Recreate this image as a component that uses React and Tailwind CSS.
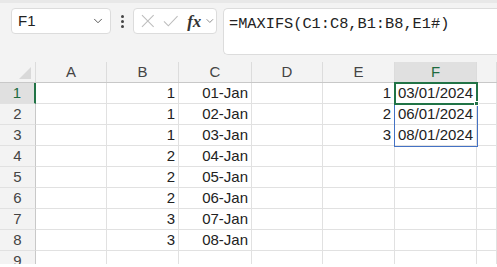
import React from 'react';
import { ChevronDown } from 'lucide-react';

const cols = [
  { key: 'A', w: 'w-[71px]' },
  { key: 'B', w: 'w-[72px]' },
  { key: 'C', w: 'w-[73px]' },
  { key: 'D', w: 'w-[71px]' },
  { key: 'E', w: 'w-[72px]' },
  { key: 'F', w: 'w-[82px]' },
  { key: 'G', w: 'w-[20px]' },
];

const rows = [
  { n: 1, B: '1', C: '01-Jan', E: '1', F: '03/01/2024' },
  { n: 2, B: '1', C: '02-Jan', E: '2', F: '06/01/2024' },
  { n: 3, B: '1', C: '03-Jan', E: '3', F: '08/01/2024' },
  { n: 4, B: '2', C: '04-Jan' },
  { n: 5, B: '2', C: '05-Jan' },
  { n: 6, B: '2', C: '06-Jan' },
  { n: 7, B: '3', C: '07-Jan' },
  { n: 8, B: '3', C: '08-Jan' },
  { n: 9 },
];

const App = () => {
  return (
    <div className="w-[497px] h-[267px] bg-white overflow-hidden font-['Liberation_Sans',Arial,sans-serif] text-[15px] text-[#222]">
      {/* Formula bar area */}
      <div className="h-[62px] bg-[#f3f3f3] border-t-[3px] border-[#e8e8e8] flex items-start pt-[5px]">
        <div className="ml-[11px] w-[100px] h-[26px] bg-white border border-[#dcdcdc] rounded-[4px] flex items-center justify-between pl-[6px] pr-[5px]">
          <span className="text-[15px] text-[#222]">F1</span>
          <ChevronDown size={14} strokeWidth={1.5} className="text-[#444]" />
        </div>

        <div className="w-[22px] h-[26px] flex flex-col items-center justify-center gap-[2px]">
          <span className="w-[3px] h-[3px] bg-[#444] rounded-full" />
          <span className="w-[3px] h-[3px] bg-[#444] rounded-full" />
          <span className="w-[3px] h-[3px] bg-[#444] rounded-full" />
        </div>

        <div className="w-[84px] h-[26px] bg-white border border-[#dcdcdc] rounded-[4px] flex items-center pl-[6px]">
          <svg width="14" height="14" viewBox="0 0 14 14" className="ml-[1px]">
            <path d="M1 1 L13 13 M13 1 L1 13" stroke="#bdbdbd" strokeWidth="1.1" fill="none" />
          </svg>
          <svg width="16" height="14" viewBox="0 0 16 14" className="ml-[8px]">
            <path d="M1 7.5 L5.5 12 L15 2" stroke="#bdbdbd" strokeWidth="1.1" fill="none" />
          </svg>
          <span className="ml-[9px] font-['Liberation_Serif',serif] italic font-bold text-[17px] text-[#333] leading-none">fx</span>
          <ChevronDown size={12} strokeWidth={1.5} className="ml-[3px] text-[#666]" />
        </div>

        <div className="ml-[6px] flex-1 h-[47px] bg-white border border-r-0 border-[#dcdcdc] rounded-tl-[5px] rounded-bl-[5px] pl-[5px] pt-[3px]">
          <span className="font-['Liberation_Mono',monospace] text-[15.3px] text-[#222]">=MAXIFS(C1:C8,B1:B8,E1#)</span>
        </div>
      </div>

      {/* Grid */}
      <div className="relative h-[202px] overflow-hidden">
        {/* column headers */}
        <div className="flex h-[21px] bg-[#f3f3f3] border-b border-[#c8c8c8]">
          <div className="w-[36px] h-full border-r border-[#dcdcdc] flex items-end justify-end pr-[4px] pb-[3px]">
            <svg width="12" height="12" viewBox="0 0 12 12">
              <path d="M12 0 L12 12 L0 12 Z" fill="#d9d9d9" />
            </svg>
          </div>
          {cols.map((c) => (
            <div
              key={c.key}
              className={`${c.w} h-full flex items-center justify-center border-r border-[#dcdcdc] ${
                c.key === 'F' ? 'bg-[#e0e0e0] text-[#1d6b3f]' : 'text-[#444]'
              }`}
            >
              {c.key === 'G' ? '' : c.key}
            </div>
          ))}
        </div>

        {rows.map((r) => (
          <div key={r.n} className="flex h-[21px]">
            <div
              className={`w-[36px] h-full flex items-center justify-center border-b border-[#e1e1e1] ${
                r.n === 1
                  ? 'bg-[#e0e0e0] text-[#1d6b3f] border-r-2 border-r-[#217346]'
                  : 'bg-[#f3f3f3] text-[#444] border-r border-r-[#c8c8c8]'
              }`}
            >
              {r.n}
            </div>
            {cols.map((c) => (
              <div
                key={c.key}
                className={`${c.w} h-full flex items-center justify-end pr-[3px] border-r border-b border-[#e1e1e1] whitespace-nowrap`}
              >
                {r[c.key] || ''}
              </div>
            ))}
          </div>
        ))}

        {/* spill range border */}
        <div className="absolute left-[394px] top-[21px] w-[84px] h-[64px] border border-[#4472c4] pointer-events-none" />
        {/* active cell */}
        <div className="absolute left-[394px] top-[20px] w-[84px] h-[23px] border-2 border-[#217346] pointer-events-none">
          <span className="absolute -right-[3px] -bottom-[3px] w-[5px] h-[5px] bg-[#217346] border border-white" />
        </div>
      </div>
    </div>
  );
};

export default App;
